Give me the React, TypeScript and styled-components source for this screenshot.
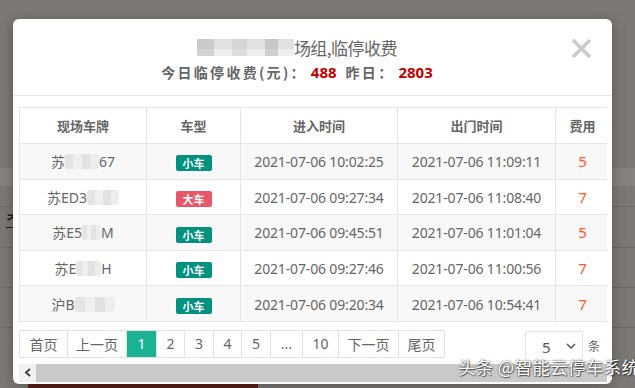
import React from "react";
import styled, { createGlobalStyle } from "styled-components";

const Global = createGlobalStyle`
  html, body { margin: 0; padding: 0; }
  body {
    width: 635px; height: 388px; overflow: hidden;
    font-family: "Noto Sans CJK SC", "Noto Sans", sans-serif;
    background: #7c7975;
  }
`;

const Page = styled.div`
  position: relative;
  width: 635px;
  height: 388px;
  overflow: hidden;
  background: #7c7975;
  display: flex;
  flex-direction: column;
`;

const BgTop = styled.div`
  height: 168px;
`;

const BgBand = styled.div<{ $h: number; $c: string; $line?: boolean }>`
  height: ${(p) => p.$h}px;
  background: ${(p) => p.$c};
  border-bottom: ${(p) => (p.$line ? "1px solid #6d6a66" : "none")};
`;

const BgGlyph = styled.div`
  padding: 4px 0 0 6px;
  font-family: "Liberation Sans", sans-serif;
  font-weight: 700;
  font-size: 15px;
  color: #1c1c1c;
  line-height: 20px;
  height: 20px;
  text-decoration: underline;
`;

const BgBottom = styled.div`
  flex: 1;
  display: flex;
  align-items: flex-end;
`;

const BgRed = styled.div`
  margin-left: 28px;
  width: 230px;
  height: 5px;
  background: #5b1f1c;
`;

const Modal = styled.div`
  position: absolute;
  left: 13px;
  top: 19px;
  width: 599px;
  height: 365px;
  background: #fff;
  border-radius: 6px;
  box-shadow: 0 2px 14px rgba(0, 0, 0, 0.3);
  display: flex;
  flex-direction: column;
  overflow: hidden;
`;

const Header = styled.div`
  position: relative;
  flex: none;
  height: 77px;
  border-bottom: 1px solid #e5e5e5;
  box-sizing: border-box;
  padding: 15px 31px 0 0;
  display: flex;
  flex-direction: column;
  align-items: center;
`;

const Title = styled.div`
  display: flex;
  align-items: center;
  height: 26px;
  font-size: 17px;
  color: #666;
  letter-spacing: -0.5px;
`;

const Mosaic = styled.span<{ $w: number; $h: number }>`
  display: inline-block;
  width: ${(p) => p.$w}px;
  height: ${(p) => p.$h}px;
  background-color: #dedede;
  background-image:
    linear-gradient(90deg, rgba(150,150,150,0.35) 0 18%, transparent 18% 36%, rgba(190,190,190,0.4) 36% 52%, transparent 52% 70%, rgba(140,140,140,0.35) 70% 84%, transparent 84%),
    linear-gradient(0deg, rgba(255,255,255,0.45) 0 40%, transparent 40%);
  opacity: 0.9;
`;

const SoftMosaic = styled.span<{ $w: number }>`
  display: inline-block;
  width: ${(p) => p.$w}px;
  height: 15px;
  vertical-align: -2px;
  background-color: #ececec;
  background-image: linear-gradient(90deg, #e4e4e4 0 25%, #efefef 25% 50%, #e2e2e2 50% 75%, #ededed 75%);
  border-radius: 3px;
`;

const Subtitle = styled.div`
  margin-top: 3px;
  display: flex;
  align-items: center;
  font-size: 14px;
  font-weight: 700;
  color: #666;
  height: 18px;
`;

const Label = styled.span`
  letter-spacing: 2.3px;
`;

const Num = styled.span<{ $gap?: number }>`
  color: #c00000;
  font-family: "Noto Sans", sans-serif;
  font-size: 15px;
  font-weight: 700;
  margin: 0 ${(p) => p.$gap ?? 0}px 0 4px;
`;

const Close = styled.button`
  position: absolute;
  right: 20px;
  top: 19px;
  width: 21px;
  height: 21px;
  padding: 0;
  border: 0;
  background: none;
  display: flex;
`;

const Body = styled.div`
  padding: 11px 5px 0 6px;
  display: flex;
  flex-direction: column;
`;

const TableWrap = styled.div`
  overflow: hidden;
  width: 588px;
`;

const Table = styled.table`
  border-collapse: collapse;
  width: 590px;
  table-layout: fixed;
  font-size: 14px;
  color: #666;
`;

const Col = styled.col<{ $w: number }>`
  width: ${(p) => p.$w}px;
`;

const Th = styled.th`
  height: 35px;
  padding: 0;
  font-size: 13px;
  font-weight: 700;
  color: #666;
  border: 1px solid #e6e6e6;
  text-align: center;
`;

const Tr = styled.tr<{ $odd: boolean }>`
  background: ${(p) => (p.$odd ? "#f8f8f8" : "#fff")};
`;

const Td = styled.td`
  height: 34.6px;
  padding: 0;
  text-align: center;
  border: 1px solid #e6e6e6;
  white-space: nowrap;
`;

const DateText = styled.span`
  font-family: "Noto Sans", sans-serif;
  font-size: 14px;
  color: #666;
  letter-spacing: -0.15px;
`;

const Plate = styled.span`
  font-family: "Noto Sans", "Noto Sans CJK SC", sans-serif;
  color: #666;
  font-size: 14px;
`;

const Tag = styled.span<{ $big: boolean }>`
  display: inline-flex;
  align-items: center;
  justify-content: center;
  width: 36px;
  height: 16px;
  border-radius: 2px;
  background: ${(p) => (p.$big ? "#e9566a" : "#00927f")};
  color: #fff;
  font-size: 11px;
  font-weight: 700;
  vertical-align: middle;
`;

const Fee = styled.span`
  font-family: "Noto Sans", sans-serif;
  color: #ff5722;
  font-size: 15px;
`;

const Footer = styled.div`
  margin-top: 8px;
  display: flex;
  align-items: flex-start;
  justify-content: space-between;
  width: 581px;
`;

const Pager = styled.div`
  display: flex;
  height: 28px;
  border: 1px solid #e2e2e2;
  border-radius: 2px;
  box-sizing: border-box;
`;

const PageBtn = styled.span<{ $active?: boolean; $w: number }>`
  display: flex;
  align-items: center;
  justify-content: center;
  width: ${(p) => p.$w}px;
  box-sizing: border-box;
  border-left: 1px solid #e2e2e2;
  font-size: 14px;
  color: ${(p) => (p.$active ? "#fff" : "#666")};
  background: ${(p) => (p.$active ? "#1ab394" : "#fff")};
  font-family: "Noto Sans", "Noto Sans CJK SC", sans-serif;
  &:first-child { border-left: 0; }
`;

const SizeBox = styled.div`
  display: flex;
  align-items: center;
  gap: 5px;
  margin-top: 1px;
`;

const Select = styled.div`
  width: 58px;
  height: 30px;
  box-sizing: border-box;
  border: 1px solid #e6e6e6;
  display: flex;
  align-items: center;
  justify-content: space-between;
  padding: 2px 6px 0 16px;
  font-family: "Noto Sans", sans-serif;
  font-size: 15px;
  color: #555;
`;

const Unit = styled.span`
  font-size: 12px;
  color: #666;
`;

const ScrollBar = styled.div`
  margin-top: 3px;
  display: flex;
  height: 18px;
  width: 588px;
`;

const ScrollArrow = styled.div`
  width: 17px;
  background: #f1f1f1;
  display: flex;
  align-items: center;
  justify-content: center;
`;

const ScrollThumb = styled.div`
  flex: 1;
  background: #c9c9c9;
`;

const Watermark = styled.div`
  position: absolute;
  left: 458px;
  top: 354px;
  font-size: 17.5px;
  color: #fff;
  letter-spacing: 0.3px;
  text-shadow: 0 0 2px rgba(0, 0, 0, 0.75), 1px 1px 1px rgba(0, 0, 0, 0.5);
  white-space: nowrap;
`;

type Row = {
  plate: React.ReactNode;
  big: boolean;
  inT: string;
  outT: string;
  fee: string;
};

const rows: Row[] = [
  { plate: <>苏<SoftMosaic $w={34} />67</>, big: false, inT: "2021-07-06 10:02:25", outT: "2021-07-06 11:09:11", fee: "5" },
  { plate: <>苏ED3<SoftMosaic $w={32} /></>, big: true, inT: "2021-07-06 09:27:34", outT: "2021-07-06 11:08:40", fee: "7" },
  { plate: <>苏E5<SoftMosaic $w={19} />M</>, big: false, inT: "2021-07-06 09:45:51", outT: "2021-07-06 11:01:04", fee: "5" },
  { plate: <>苏E<SoftMosaic $w={25} />H</>, big: false, inT: "2021-07-06 09:27:46", outT: "2021-07-06 11:00:56", fee: "7" },
  { plate: <>沪B<SoftMosaic $w={40} /></>, big: false, inT: "2021-07-06 09:20:34", outT: "2021-07-06 10:54:41", fee: "7" },
];

const pages: { label: string; w: number; active?: boolean }[] = [
  { label: "首页", w: 47 },
  { label: "上一页", w: 59 },
  { label: "1", w: 30, active: true },
  { label: "2", w: 28 },
  { label: "3", w: 29 },
  { label: "4", w: 28 },
  { label: "5", w: 29 },
  { label: "...", w: 32 },
  { label: "10", w: 36 },
  { label: "下一页", w: 60 },
  { label: "尾页", w: 46 },
];

export default function App() {
  return (
    <>
      <Global />
      <Page>
        <BgTop />
        <BgBand $h={18} $c="#86837f" />
        <BgBand $h={20} $c="#7c7975" $line />
        <BgGlyph>ᄌ</BgGlyph>
        <BgBand $h={16} $c="#7c7975" $line />
        <BgBand $h={39} $c="#7c7975" $line />
        <BgBand $h={39} $c="#7c7975" $line />
        <BgBottom>
          <BgRed />
        </BgBottom>

        <Modal>
          <Header>
            <Title>
              <Mosaic $w={97} $h={17} />
              场组,临停收费
            </Title>
            <Subtitle>
              <Label>今日临停收费(元)：</Label>
              <Num $gap={9}>488</Num>
              <Label>昨日：</Label>
              <Num>2803</Num>
            </Subtitle>
            <Close aria-label="close">
              <svg width="21" height="21" viewBox="0 0 21 21">
                <path d="M2 2 L19 19 M19 2 L2 19" stroke="#cbcbcb" strokeWidth="3.6" strokeLinecap="butt" />
              </svg>
            </Close>
          </Header>

          <Body>
            <TableWrap>
              <Table>
                <colgroup>
                  <Col $w={127} />
                  <Col $w={94} />
                  <Col $w={157} />
                  <Col $w={158} />
                  <Col $w={54} />
                </colgroup>
                <thead>
                  <tr>
                    <Th>现场车牌</Th>
                    <Th>车型</Th>
                    <Th>进入时间</Th>
                    <Th>出门时间</Th>
                    <Th>费用</Th>
                  </tr>
                </thead>
                <tbody>
                  {rows.map((r, i) => (
                    <Tr key={i} $odd={i % 2 === 0}>
                      <Td><Plate>{r.plate}</Plate></Td>
                      <Td><Tag $big={r.big}>{r.big ? "大车" : "小车"}</Tag></Td>
                      <Td><DateText>{r.inT}</DateText></Td>
                      <Td><DateText>{r.outT}</DateText></Td>
                      <Td><Fee>{r.fee}</Fee></Td>
                    </Tr>
                  ))}
                </tbody>
              </Table>
            </TableWrap>

            <Footer>
              <Pager>
                {pages.map((p) => (
                  <PageBtn key={p.label} $w={p.w} $active={p.active}>{p.label}</PageBtn>
                ))}
              </Pager>
              <SizeBox>
                <Select>
                  5
                  <svg width="10" height="7" viewBox="0 0 10 7">
                    <path d="M1 1 L5 5 L9 1" fill="none" stroke="#555" strokeWidth="1.5" />
                  </svg>
                </Select>
                <Unit>条</Unit>
              </SizeBox>
            </Footer>

            <ScrollBar>
              <ScrollArrow>
                <svg width="8" height="9" viewBox="0 0 8 9">
                  <path d="M6 1 L2 4.5 L6 8" fill="none" stroke="#444" strokeWidth="2" />
                </svg>
              </ScrollArrow>
              <ScrollThumb />
            </ScrollBar>
          </Body>
        </Modal>

        <Watermark>头条 @智能云停车系统</Watermark>
      </Page>
    </>
  );
}
